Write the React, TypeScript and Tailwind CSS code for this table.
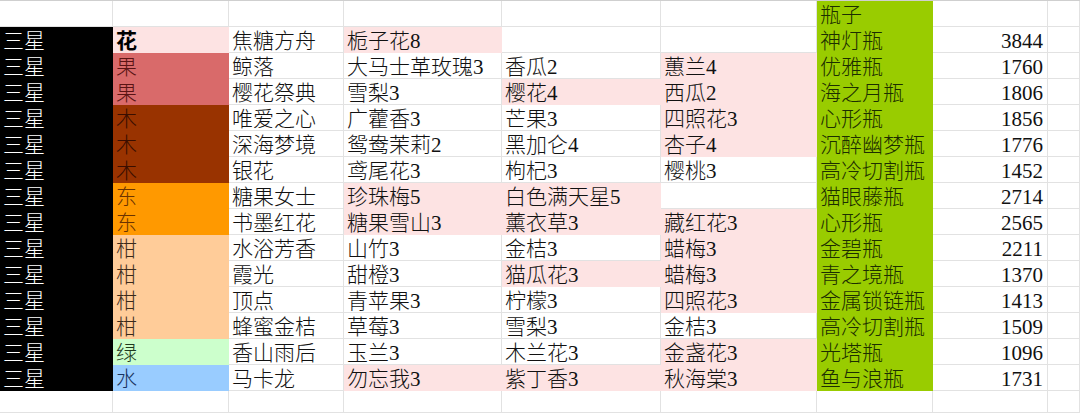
type Cell = { t?: string; pink?: boolean };

const rows: { tier: string; kind: string; name: string; d: Cell; e: Cell; f: Cell; bottle: string; score: string }[] = [
  { tier: "三星", kind: "花", name: "焦糖方舟", d: { t: "栀子花8", pink: true }, e: {}, f: {}, bottle: "神灯瓶", score: "3844" },
  { tier: "三星", kind: "果", name: "鲸落", d: { t: "大马士革玫瑰3" }, e: { t: "香瓜2" }, f: { t: "蕙兰4", pink: true }, bottle: "优雅瓶", score: "1760" },
  { tier: "三星", kind: "果", name: "樱花祭典", d: { t: "雪梨3" }, e: { t: "樱花4", pink: true }, f: { t: "西瓜2", pink: true }, bottle: "海之月瓶", score: "1806" },
  { tier: "三星", kind: "木", name: "唯爱之心", d: { t: "广藿香3" }, e: { t: "芒果3" }, f: { t: "四照花3", pink: true }, bottle: "心形瓶", score: "1856" },
  { tier: "三星", kind: "木", name: "深海梦境", d: { t: "鸳鸯茉莉2" }, e: { t: "黑加仑4" }, f: { t: "杏子4", pink: true }, bottle: "沉醉幽梦瓶", score: "1776" },
  { tier: "三星", kind: "木", name: "银花", d: { t: "鸢尾花3" }, e: { t: "枸杞3" }, f: { t: "樱桃3" }, bottle: "高冷切割瓶", score: "1452" },
  { tier: "三星", kind: "东", name: "糖果女士", d: { t: "珍珠梅5", pink: true }, e: { t: "白色满天星5", pink: true }, f: {}, bottle: "猫眼藤瓶", score: "2714" },
  { tier: "三星", kind: "东", name: "书墨红花", d: { t: "糖果雪山3", pink: true }, e: { t: "薰衣草3", pink: true }, f: { t: "藏红花3", pink: true }, bottle: "心形瓶", score: "2565" },
  { tier: "三星", kind: "柑", name: "水浴芳香", d: { t: "山竹3" }, e: { t: "金桔3" }, f: { t: "蜡梅3", pink: true }, bottle: "金碧瓶", score: "2211" },
  { tier: "三星", kind: "柑", name: "霞光", d: { t: "甜橙3" }, e: { t: "猫瓜花3", pink: true }, f: { t: "蜡梅3", pink: true }, bottle: "青之境瓶", score: "1370" },
  { tier: "三星", kind: "柑", name: "顶点", d: { t: "青苹果3" }, e: { t: "柠檬3" }, f: { t: "四照花3", pink: true }, bottle: "金属锁链瓶", score: "1413" },
  { tier: "三星", kind: "柑", name: "蜂蜜金桔", d: { t: "草莓3" }, e: { t: "雪梨3" }, f: { t: "金桔3" }, bottle: "高冷切割瓶", score: "1509" },
  { tier: "三星", kind: "绿", name: "香山雨后", d: { t: "玉兰3" }, e: { t: "木兰花3" }, f: { t: "金盏花3", pink: true }, bottle: "光塔瓶", score: "1096" },
  { tier: "三星", kind: "水", name: "马卡龙", d: { t: "勿忘我3", pink: true }, e: { t: "紫丁香3", pink: true }, f: { t: "秋海棠3", pink: true }, bottle: "鱼与浪瓶", score: "1731" },
];

// fill + text colour per kind, border matches fill so gridlines vanish like in Excel
const kindStyle: Record<string, string> = {
  花: "bg-[#fde3e3] border-[#fde3e3] text-black font-bold",
  果: "bg-[#d96a6a] border-[#d96a6a] text-[#5a1414]",
  木: "bg-[#993300] border-[#993300] text-[#3a0e00]",
  东: "bg-[#ff9900] border-[#ff9900] text-[#6b3300]",
  柑: "bg-[#ffcc99] border-[#ffcc99] text-[#3a2a1a]",
  绿: "bg-[#ccffcc] border-[#ccffcc] text-[#1f3a1f]",
  水: "bg-[#99ccff] border-[#99ccff] text-[#1a3360]",
};

const white = "bg-white border-[#e2e2e2] text-[#111]";
const pink = "bg-[#fde3e3] border-[#fde3e3] text-[#111]";
const green = "bg-[#99cc00] border-[#99cc00] text-[#1c2e00]";
const black = "bg-black border-black text-white";

function C({ cls, children, right }: { cls: string; children?: React.ReactNode; right?: boolean }) {
  return (
    <div
      className={`border-r border-b whitespace-nowrap overflow-hidden pt-[2px] ${right ? "text-right pr-[4px]" : "pl-[3px]"} ${cls}`}
    >
      {children}
    </div>
  );
}

export default function App() {
  return (
    <div className="w-[1080px] h-[413px] overflow-hidden bg-white border-t border-[#cfcfcf] text-[21px] leading-[24px] font-light [font-family:'Liberation_Serif','Noto_Sans_CJK_SC',serif]">
      <div className="grid grid-cols-[113px_116px_115px_158px_159px_156px_116px_115px_1fr] grid-rows-[26px_repeat(14,26px)_1fr] h-[412px]">
        {/* header row */}
        <C cls={white} />
        <C cls={white} />
        <C cls={white} />
        <C cls={white} />
        <C cls={white} />
        <C cls={white} />
        <C cls={green}>瓶子</C>
        <C cls={white} />
        <C cls={white} />

        {rows.map((r, i) => (
          <div key={i} className="contents">
            <C cls={black}>{r.tier}</C>
            <C cls={kindStyle[r.kind]}>{r.kind}</C>
            <C cls={white}>{r.name}</C>
            <C cls={r.d.pink ? pink : white}>{r.d.t}</C>
            <C cls={r.e.pink ? pink : white}>{r.e.t}</C>
            <C cls={r.f.pink ? pink : white}>{r.f.t}</C>
            <C cls={green}>{r.bottle}</C>
            <C cls={white} right>
              {r.score}
            </C>
            <C cls={white} />
          </div>
        ))}

        {/* trailing empty row */}
        {Array.from({ length: 9 }).map((_, i) => (
          <C key={i} cls={white} />
        ))}
      </div>
    </div>
  );
}
